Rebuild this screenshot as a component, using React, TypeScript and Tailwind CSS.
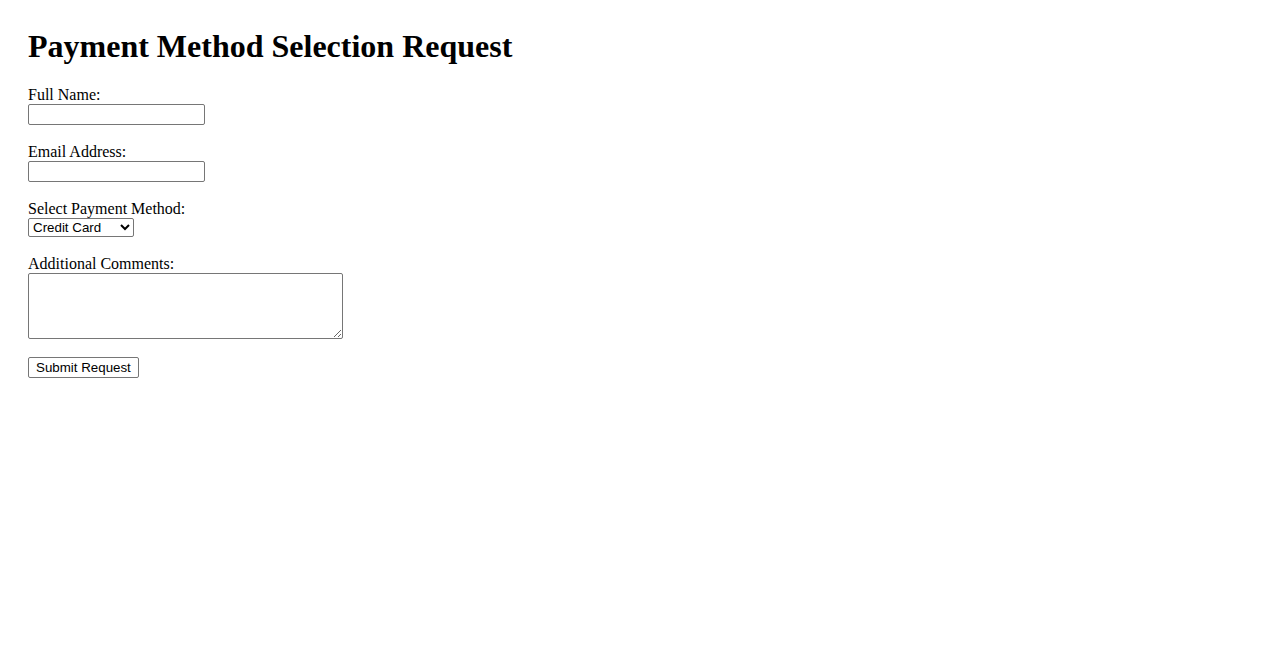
export default function App() {
  const control = "font-['Liberation_Sans',Arial,sans-serif] text-[13.333px] text-black bg-white border border-[#767676] rounded-[2px]";

  return (
    <div className="min-h-screen bg-white px-[28px] pt-[28px] font-['Liberation_Serif','Times_New_Roman',serif] text-[16px] leading-[normal] text-black">
      <h1 className="text-[32px] font-bold leading-[normal] mb-[21px]">Payment Method Selection Request</h1>

      <form className="flex flex-col items-start" onSubmit={(e) => e.preventDefault()}>
        <div className="flex flex-col items-start mb-[18px]">
          <label htmlFor="name">Full Name:</label>
          <input id="name" type="text" className={`${control} w-[177px] h-[21px] px-[2px]`} />
        </div>

        <div className="flex flex-col items-start mb-[18px]">
          <label htmlFor="email">Email Address:</label>
          <input id="email" type="email" className={`${control} w-[177px] h-[21px] px-[2px]`} />
        </div>

        <div className="flex flex-col items-start mb-[18px]">
          <label htmlFor="method">Select Payment Method:</label>
          <select id="method" defaultValue="credit" className={`${control} w-[106px] h-[19px]`}>
            <option value="credit">Credit Card</option>
            <option value="paypal">PayPal</option>
            <option value="bank">Bank Transfer</option>
          </select>
        </div>

        <div className="flex flex-col items-start mb-[18px]">
          <label htmlFor="comments">Additional Comments:</label>
          <textarea id="comments" className={`${control} w-[315px] h-[66px] px-[2px] py-[2px]`} />
        </div>

        <button type="submit" className={`${control} bg-[#efefef] h-[21px] px-[7px]`}>
          Submit Request
        </button>
      </form>
    </div>
  );
}
